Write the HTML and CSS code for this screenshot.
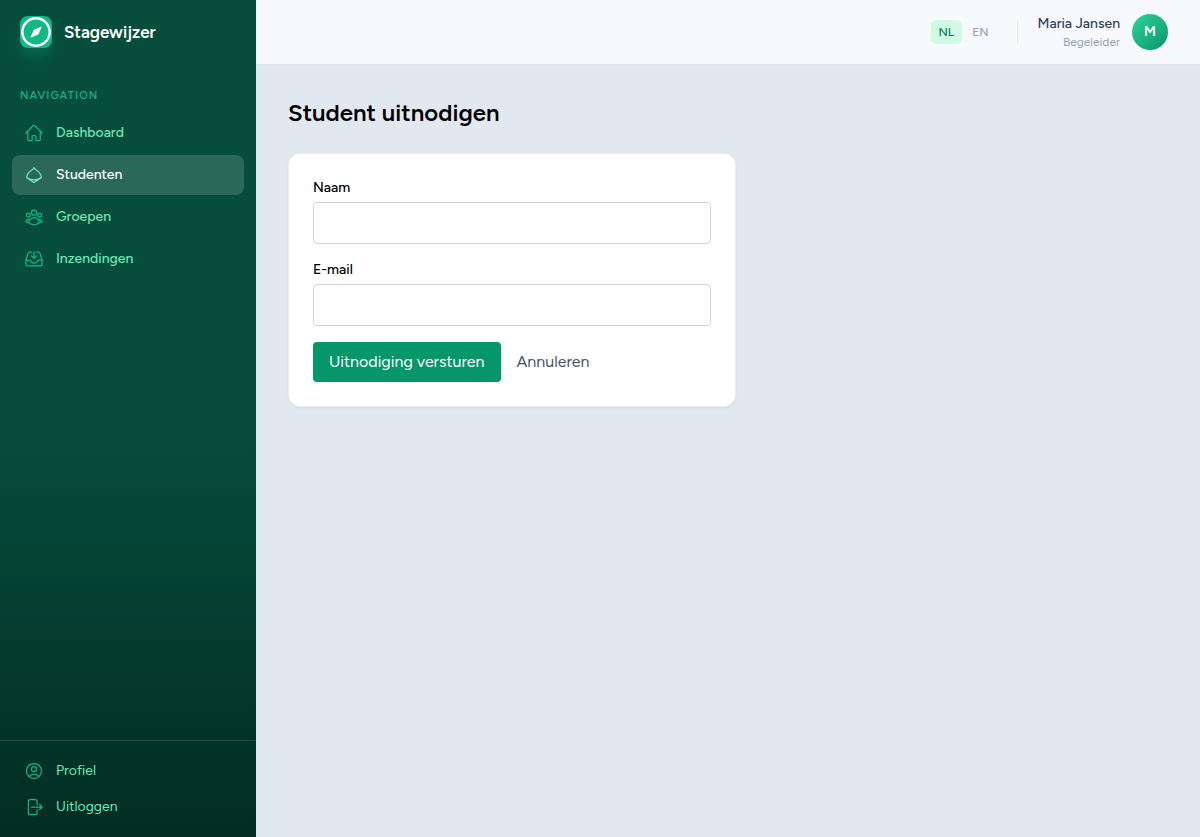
FILE: index.html
```html
<!DOCTYPE html>
<html lang="nl">
<head>
    <meta charset="UTF-8">
    <meta name="viewport" content="width=device-width, initial-scale=1.0">
    <title>Student uitnodigen - Stagewijzer</title>
    <link rel="stylesheet" href="styles.css">
</head>
<body>
    <!-- Zijbalk -->
    <aside class="sidebar">
        <a class="brand" href="#">
            <svg class="logo" viewBox="0 0 32 32">
                <circle cx="16" cy="16" r="13.7" fill="none" stroke="#fff" stroke-width="2.5"/>
                <path d="M21.8 10.4l-3.4 8-8 3.4 3.4-8z" fill="#fff"/>
            </svg>
            <span>Stagewijzer</span>
        </a>

        <nav class="menu">
            <p class="menu-title">Navigation</p>
            <a class="menu-link" href="#">
                <svg class="icon" viewBox="0 0 24 24"><path d="m2.25 12 8.954-8.955a1.126 1.126 0 0 1 1.591 0L21.75 12M4.5 9.75v10.125c0 .621.504 1.125 1.125 1.125H9.75v-4.875c0-.621.504-1.125 1.125-1.125h2.25c.621 0 1.125.504 1.125 1.125V21h4.125c.621 0 1.125-.504 1.125-1.125V9.75"/></svg>
                Dashboard
            </a>
            <a class="menu-link active" href="#">
                <svg class="icon" viewBox="0 0 24 24"><path d="M12 3c-.5 1.700-1.500 2.300-3 3.200C5.800 8.200 3.800 10.800 3.300 14.200c-.1.900.1 1.300.8 1.700L12 21l7.900-5.100c.700-.4.900-.8.800-1.700-.5-3.400-2.500-6-5.700-8-1.500-.9-2.500-1.500-3-3.200zM3.500 15c2.500 2 5.300 2.900 8.500 2.900s6-.9 8.500-2.900"/></svg>
                Studenten
            </a>
            <a class="menu-link" href="#">
                <svg class="icon" viewBox="0 0 24 24"><path d="M18 18.720a9.094 9.094 0 0 0 3.741-.479 3 3 0 0 0-4.682-2.720m.940 3.198.001.031c0 .225-.012.447-.037.666A11.944 11.944 0 0 1 12 21c-2.170 0-4.207-.576-5.963-1.584A6.062 6.062 0 0 1 6 18.719m12 0a5.971 5.971 0 0 0-.941-3.197m0 0A5.995 5.995 0 0 0 12 12.750a5.995 5.995 0 0 0-5.058 2.772m0 0a3 3 0 0 0-4.681 2.720 8.986 8.986 0 0 0 3.740.477m.940-3.197a5.971 5.971 0 0 0-.940 3.197M15 6.750a3 3 0 1 1-6 0 3 3 0 0 1 6 0Zm6 3a2.250 2.250 0 1 1-4.500 0 2.250 2.250 0 0 1 4.500 0Zm-13.500 0a2.250 2.250 0 1 1-4.500 0 2.250 2.250 0 0 1 4.500 0Z"/></svg>
                Groepen
            </a>
            <a class="menu-link" href="#">
                <svg class="icon" viewBox="0 0 24 24"><path d="M9 3.750H6.912a2.250 2.250 0 0 0-2.150 1.588L2.350 13.177a2.250 2.250 0 0 0-.1.661V18a2.250 2.250 0 0 0 2.250 2.250h15A2.250 2.250 0 0 0 21.750 18v-4.162c0-.224-.034-.447-.1-.661L19.240 5.338a2.250 2.250 0 0 0-2.150-1.588H15M2.250 13.500h3.860a2.250 2.250 0 0 1 2.012 1.244l.256.512a2.250 2.250 0 0 0 2.013 1.244h3.218a2.250 2.250 0 0 0 2.013-1.244l.256-.512a2.250 2.250 0 0 1 2.013-1.244h3.859M12 3v8.250m0 0-3-3m3 3 3-3"/></svg>
                Inzendingen
            </a>
        </nav>

        <div class="account">
            <a class="menu-link small" href="#">
                <svg class="icon" viewBox="0 0 24 24"><path d="M17.982 18.725A7.488 7.488 0 0 0 12 15.750a7.488 7.488 0 0 0-5.982 2.975m11.963 0a9 9 0 1 0-11.963 0m11.963 0A8.966 8.966 0 0 1 12 21a8.966 8.966 0 0 1-5.982-2.275M15 9.750a3 3 0 1 1-6 0 3 3 0 0 1 6 0Z"/></svg>
                Profiel
            </a>
            <button class="menu-link small" type="button">
                <svg class="icon" viewBox="0 0 24 24"><path d="M15.750 9V5.250A2.250 2.250 0 0 0 13.500 3h-6a2.250 2.250 0 0 0-2.250 2.250v13.500A2.250 2.250 0 0 0 7.500 21h6a2.250 2.250 0 0 0 2.250-2.250V15m3 0 3-3m0 0-3-3m3 3H9"/></svg>
                Uitloggen
            </button>
        </div>
    </aside>

    <div class="page">
        <!-- Bovenbalk -->
        <header class="topbar">
            <div class="languages">
                <a class="lang current" href="#">NL</a>
                <a class="lang" href="#">EN</a>
            </div>
            <div class="user">
                <div class="user-text">
                    <p class="user-name">Maria Jansen</p>
                    <p class="user-role">Begeleider</p>
                </div>
                <div class="avatar">M</div>
            </div>
        </header>

        <!-- Inhoud -->
        <main class="content">
            <h1>Student uitnodigen</h1>
            <form class="card">
                <div class="field">
                    <label for="name">Naam</label>
                    <input id="name" type="text" name="name">
                </div>
                <div class="field">
                    <label for="email">E-mail</label>
                    <input id="email" type="email" name="email">
                </div>
                <div class="actions">
                    <button class="btn" type="submit">Uitnodiging versturen</button>
                    <a class="cancel" href="#">Annuleren</a>
                </div>
            </form>
        </main>
    </div>
</body>
</html>
```

FILE: styles.css
```css
* {
    box-sizing: border-box;
    margin: 0;
    padding: 0;
}

body {
    display: flex;
    min-height: 100vh;
    background: #e2e8f0;
    color: #000;
    font-family: Figtree, Lato, sans-serif;
    font-size: 16px;
    line-height: 24px;
    -webkit-font-smoothing: antialiased;
}

a {
    color: inherit;
    text-decoration: none;
}

button,
input {
    font: inherit;
}

/* Zijbalk */
.sidebar {
    display: flex;
    flex-direction: column;
    flex: none;
    width: 256px;
    background: linear-gradient(to bottom, #064e3b 50%, #022c22);
}

.brand {
    display: flex;
    align-items: center;
    gap: 12px;
    height: 64px;
    padding: 0 20px;
    color: #fff;
    font-size: 17px;
    font-weight: 600;
}

.logo {
    width: 32px;
    height: 32px;
    border-radius: 8px;
    background: #10b981;
    box-shadow: 0 10px 15px -3px rgba(16, 185, 129, 0.3);
}

.menu {
    flex: 1;
    display: flex;
    flex-direction: column;
    gap: 2px;
    padding: 20px 12px;
}

.menu-title {
    padding: 0 8px 3px;
    color: #1fa97a;
    font-size: 11px;
    font-weight: 600;
    letter-spacing: 1px;
    text-transform: uppercase;
}

.menu-link {
    display: flex;
    align-items: center;
    gap: 12px;
    width: 100%;
    height: 40px;
    padding: 0 12px;
    border: 0;
    border-radius: 8px;
    background: none;
    color: #6ee7b7;
    font-size: 14px;
    font-weight: 500;
    cursor: pointer;
}

.menu-link.small {
    height: 36px;
    font-weight: 400;
}

.menu-link.active {
    background: rgba(255, 255, 255, 0.15);
    color: #fff;
}

.icon {
    width: 20px;
    height: 20px;
    fill: none;
    stroke: #10b981;
    stroke-width: 1.5;
    stroke-linecap: round;
    stroke-linejoin: round;
}

.active .icon {
    stroke: #6ee7b7;
}

.account {
    padding: 12px;
    border-top: 1px solid rgba(255, 255, 255, 0.12);
}

/* Bovenbalk */
.page {
    flex: 1;
}

.topbar {
    display: flex;
    align-items: center;
    justify-content: flex-end;
    height: 65px;
    padding: 0 32px;
    border-bottom: 1px solid #d8e0e9;
    background: #f7f9fc;
}

.languages {
    display: flex;
    gap: 2px;
    padding-right: 20px;
    border-right: 1px solid #e2e8f0;
    font-size: 12px;
    font-weight: 500;
}

.lang {
    padding: 0 8px;
    border-radius: 6px;
    color: #94a3b8;
}

.lang.current {
    background: #d1fae5;
    color: #047857;
}

.user {
    display: flex;
    align-items: center;
    gap: 12px;
    padding-left: 20px;
    text-align: right;
}

.user-name {
    color: #334155;
    font-size: 14px;
    font-weight: 500;
    line-height: 20px;
}

.user-role {
    color: #94a3b8;
    font-size: 12px;
    line-height: 16px;
}

.avatar {
    width: 36px;
    height: 36px;
    border-radius: 50%;
    background: linear-gradient(135deg, #34d399, #059669);
    color: #fff;
    font-size: 14px;
    font-weight: 600;
    line-height: 36px;
    text-align: center;
}

/* Inhoud */
.content {
    padding: 32px;
}

h1 {
    margin-bottom: 24px;
    font-size: 24px;
    font-weight: 600;
    line-height: 32px;
}

.card {
    display: grid;
    gap: 16px;
    max-width: 448px;
    padding: 24px;
    border: 1px solid #e9eef5;
    border-radius: 12px;
    background: #fff;
    box-shadow: 0 1px 2px rgba(0, 0, 0, 0.06);
}

.field {
    display: grid;
    gap: 4px;
}

label {
    font-size: 14px;
    font-weight: 500;
    line-height: 20px;
}

input {
    width: 100%;
    height: 42px;
    padding: 8px 12px;
    border: 1px solid #cbd5e1;
    border-radius: 4px;
}

.actions {
    display: flex;
    align-items: center;
    gap: 16px;
}

.btn {
    padding: 8px 16px;
    border: 0;
    border-radius: 4px;
    background: #059669;
    color: #fff;
    cursor: pointer;
}

.cancel {
    color: #475569;
}
```
